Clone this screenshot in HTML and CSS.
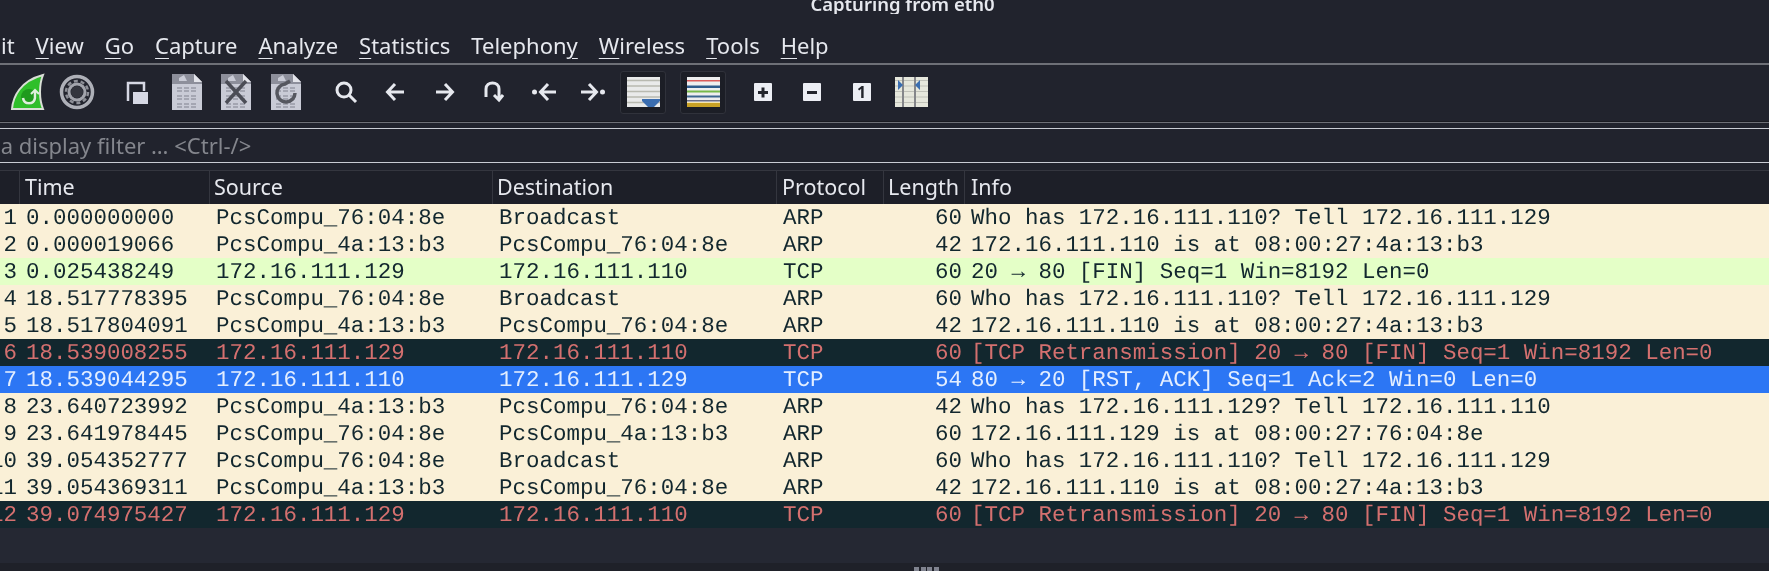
FILE: index.html
```html
<!DOCTYPE html>
<html lang="en">
<head>
    <meta charset="UTF-8">
    <meta name="viewport" content="width=device-width, initial-scale=1.0">
    <title>Capturing from eth0</title>
    <link rel="stylesheet" href="styles.css">
</head>
<body>
<div class="window">

    <div class="titlebar"><span>Capturing from eth0</span></div>

    <nav class="menubar">
        <span class="menu">File</span>
        <span class="menu"><u>E</u>dit</span>
        <span class="menu"><u>V</u>iew</span>
        <span class="menu"><u>G</u>o</span>
        <span class="menu"><u>C</u>apture</span>
        <span class="menu"><u>A</u>nalyze</span>
        <span class="menu"><u>S</u>tatistics</span>
        <span class="menu">Telephon<u>y</u></span>
        <span class="menu"><u>W</u>ireless</span>
        <span class="menu"><u>T</u>ools</span>
        <span class="menu"><u>H</u>elp</span>
    </nav>

    <div class="toolbar">
        <div class="tool">
            <svg width="35" height="38" viewBox="0 0 35 38">
                <path d="M2 36 C3 24 10 8 33 2 C29 12 29 26 33 36 Z" fill="#2fbf2a" stroke="#d9dfd6" stroke-width="2"/>
                <circle cx="19" cy="24" r="8" fill="#1f9a1d"/>
                <path d="M13 25 C14 32 24 32 25 25 L25 18" fill="none" stroke="#dff0dc" stroke-width="2.5"/>
                <path d="M21 21 L25 17 L29 21" fill="none" stroke="#dff0dc" stroke-width="2"/>
            </svg>
        </div>
        <div class="tool">
            <svg width="36" height="36" viewBox="0 0 36 36">
                <circle cx="18" cy="18" r="15.5" fill="#23252f" stroke="#aeb0b8" stroke-width="3.5"/>
                <circle cx="18" cy="18" r="11" fill="none" stroke="#8d8f97" stroke-width="2.5" stroke-dasharray="4 2.9"/>
                <circle cx="18" cy="18" r="8" fill="none" stroke="#a2a4ac" stroke-width="3"/>
                <circle cx="18" cy="18" r="6" fill="#33353e"/>
            </svg>
        </div>

        <div class="tool tool-gap">
            <svg width="22" height="23" viewBox="0 0 22 23">
                <path d="M2 20 V2 H18 V10" fill="none" stroke="#d6d8e4" stroke-width="2.5"/>
                <rect x="7" y="11" width="15" height="12" fill="#d6d8e4"/>
            </svg>
        </div>
        <div class="tool">
            <svg width="30" height="36" viewBox="0 0 30 36">
                <use href="#sheet"/>
            </svg>
        </div>
        <div class="tool">
            <svg width="30" height="36" viewBox="0 0 30 36">
                <use href="#sheet"/>
                <path d="M5 7 L25 29 M25 7 L5 29" stroke="#4b4d56" stroke-width="3.5"/>
            </svg>
        </div>
        <div class="tool">
            <svg width="30" height="36" viewBox="0 0 30 36">
                <use href="#sheet"/>
                <path d="M19 7 L14 10 A9 9 0 1 0 24 19" fill="none" stroke="#55575f" stroke-width="3.5"/>
            </svg>
        </div>

        <div class="tool tool-gap">
            <svg width="24" height="24" viewBox="0 0 24 24" class="glyph">
                <circle cx="10" cy="10" r="7"/>
                <path d="M15 15 L22 22"/>
            </svg>
        </div>
        <div class="tool">
            <svg width="20" height="20" viewBox="0 0 20 20" class="glyph">
                <path d="M19 10 H3 M10 2 L2.5 10 L10 18"/>
            </svg>
        </div>
        <div class="tool">
            <svg width="20" height="20" viewBox="0 0 20 20" class="glyph">
                <path d="M1 10 H17 M10 2 L17.5 10 L10 18"/>
            </svg>
        </div>
        <div class="tool">
            <svg width="20" height="22" viewBox="0 0 20 22" class="glyph">
                <path d="M2 16 V8 C2 0 15 0 15 8 V18 M10 14 L15 19 L19 14"/>
            </svg>
        </div>
        <div class="tool">
            <svg width="26" height="20" viewBox="0 0 26 20" class="glyph">
                <circle cx="3.5" cy="10" r="2.5" class="dot"/>
                <path d="M25 10 H10 M17 2 L9.5 10 L17 18"/>
            </svg>
        </div>
        <div class="tool">
            <svg width="26" height="20" viewBox="0 0 26 20" class="glyph">
                <circle cx="22.5" cy="10" r="2.5" class="dot"/>
                <path d="M1 10 H16 M9 2 L16.5 10 L9 18"/>
            </svg>
        </div>
        <div class="tool">
            <span class="toggle">
                <svg width="33" height="30" viewBox="0 0 33 30">
                    <rect width="33" height="30" fill="#e9eaea"/>
                    <path d="M0 3.5 H33 M0 9 H33 M0 14.5 H33 M0 20 H33 M0 25.5 H33" stroke="#b8b9b0" stroke-width="1.5"/>
                    <path d="M15 22 H33 V24 L27 30 H21 L15 24 Z" fill="#3a6db0"/>
                </svg>
            </span>
        </div>
        <div class="tool tool-gap">
            <span class="toggle">
                <svg width="33" height="30" viewBox="0 0 33 30">
                    <rect width="33" height="30" fill="#eeeeee"/>
                    <rect y="3" width="33" height="1.5" fill="#d95a5a"/>
                    <rect y="8.5" width="33" height="2.5" fill="#2e5b8c"/>
                    <rect y="13.5" width="33" height="2" fill="#76b84a"/>
                    <rect y="18.5" width="33" height="2" fill="#3d6690"/>
                    <rect y="23" width="33" height="1.5" fill="#6c6f86"/>
                    <rect y="25" width="33" height="1" fill="#f5e6b0"/>
                    <rect y="26" width="33" height="4" fill="#c9a227"/>
                </svg>
            </span>
        </div>
        <div class="tool tool-gap">
            <span class="zoombox"><i class="bar"></i><i class="bar bar-v"></i></span>
        </div>
        <div class="tool">
            <span class="zoombox"><i class="bar"></i></span>
        </div>
        <div class="tool">
            <span class="zoombox">1</span>
        </div>
        <div class="tool">
            <svg width="33" height="30" viewBox="0 0 33 30">
                <rect width="33" height="30" fill="#e6e7dc"/>
                <path d="M0 3.5 H33 M0 9 H33 M0 14.5 H33 M0 20 H33 M0 25.5 H33" stroke="#c0c1b8" stroke-width="1.2"/>
                <path d="M8 0 V30 M20 0 V30" stroke="#85868a" stroke-width="2"/>
                <path d="M3 3 L8 8 L3 13 Z M25 3 L20 8 L25 13 Z" fill="#3a6db0"/>
            </svg>
        </div>
    </div>

    <div class="filterbar">
        <div class="filter"><span class="filter-text">Apply a display filter … &lt;Ctrl-/&gt;</span></div>
    </div>

    <div class="pkt-list">
        <div class="pkt-head">
            <span>No.</span><span>Time</span><span>Source</span><span>Destination</span><span>Protocol</span><span>Length</span><span>Info</span>
        </div>

        <div class="pkt arp"><span>1</span><span>0.000000000</span><span>PcsCompu_76:04:8e</span><span>Broadcast</span><span>ARP</span><span>60</span><span>Who has 172.16.111.110? Tell 172.16.111.129</span></div>
        <div class="pkt arp"><span>2</span><span>0.000019066</span><span>PcsCompu_4a:13:b3</span><span>PcsCompu_76:04:8e</span><span>ARP</span><span>42</span><span>172.16.111.110 is at 08:00:27:4a:13:b3</span></div>
        <div class="pkt tcp"><span>3</span><span>0.025438249</span><span>172.16.111.129</span><span>172.16.111.110</span><span>TCP</span><span>60</span><span>20 → 80 [FIN] Seq=1 Win=8192 Len=0</span></div>
        <div class="pkt arp"><span>4</span><span>18.517778395</span><span>PcsCompu_76:04:8e</span><span>Broadcast</span><span>ARP</span><span>60</span><span>Who has 172.16.111.110? Tell 172.16.111.129</span></div>
        <div class="pkt arp"><span>5</span><span>18.517804091</span><span>PcsCompu_4a:13:b3</span><span>PcsCompu_76:04:8e</span><span>ARP</span><span>42</span><span>172.16.111.110 is at 08:00:27:4a:13:b3</span></div>
        <div class="pkt bad"><span>6</span><span>18.539008255</span><span>172.16.111.129</span><span>172.16.111.110</span><span>TCP</span><span>60</span><span>[TCP Retransmission] 20 → 80 [FIN] Seq=1 Win=8192 Len=0</span></div>
        <div class="pkt selected"><span>7</span><span>18.539044295</span><span>172.16.111.110</span><span>172.16.111.129</span><span>TCP</span><span>54</span><span>80 → 20 [RST, ACK] Seq=1 Ack=2 Win=0 Len=0</span></div>
        <div class="pkt arp"><span>8</span><span>23.640723992</span><span>PcsCompu_4a:13:b3</span><span>PcsCompu_76:04:8e</span><span>ARP</span><span>42</span><span>Who has 172.16.111.129? Tell 172.16.111.110</span></div>
        <div class="pkt arp"><span>9</span><span>23.641978445</span><span>PcsCompu_76:04:8e</span><span>PcsCompu_4a:13:b3</span><span>ARP</span><span>60</span><span>172.16.111.129 is at 08:00:27:76:04:8e</span></div>
        <div class="pkt arp"><span>10</span><span>39.054352777</span><span>PcsCompu_76:04:8e</span><span>Broadcast</span><span>ARP</span><span>60</span><span>Who has 172.16.111.110? Tell 172.16.111.129</span></div>
        <div class="pkt arp"><span>11</span><span>39.054369311</span><span>PcsCompu_4a:13:b3</span><span>PcsCompu_76:04:8e</span><span>ARP</span><span>42</span><span>172.16.111.110 is at 08:00:27:4a:13:b3</span></div>
        <div class="pkt bad"><span>12</span><span>39.074975427</span><span>172.16.111.129</span><span>172.16.111.110</span><span>TCP</span><span>60</span><span>[TCP Retransmission] 20 → 80 [FIN] Seq=1 Win=8192 Len=0</span></div>
    </div>

    <div class="detail-pane"></div>
    <div class="splitter"><span class="grip"></span></div>

    <!-- shared page shape for the file icons -->
    <svg width="0" height="0" class="defs">
        <defs>
            <g id="sheet">
                <path d="M0 0 H22 L30 8 V36 H0 Z" fill="#c9cbd6"/>
                <path d="M0 0 H22 L30 8 V10 H0 Z" fill="#8d8f9b"/>
                <path d="M22 0 L30 8 H22 Z" fill="#e3e4ea"/>
                <path d="M7 4 L12 1 L15 7 H7 Z" fill="#c9cbd6"/>
                <path d="M5 14 H25 M5 17 H25 M5 22 H25 M5 25 H25 M5 30 H25 M5 33 H25" stroke="#a4a6b2" stroke-width="2" stroke-dasharray="5 2"/>
            </g>
        </defs>
    </svg>
</div>
</body>
</html>
```

FILE: styles.css
```css
:root {
    --bg: #21232d;
    --bg-dark: #1c1e26;
    --text: #e6e8ee;
    --ink: #12272e;
}

body {
    margin: 0;
    background: var(--bg);
    overflow: hidden;
}

.window {
    display: flex;
    flex-direction: column;
    height: 571px;
    overflow: hidden;
    color: var(--text);
    font-family: "Noto Sans", sans-serif;
    filter: blur(0.5px);
}

/* title, cut off by the top of the frame */
.titlebar {
    height: 14px;
    flex: none;
    display: flex;
    justify-content: center;
    align-items: flex-end;
    padding-left: 36px;
    overflow: hidden;
    font-size: 18.5px;
    font-weight: 600;
    line-height: 20px;
}

.menubar {
    height: 51px;
    flex: none;
    box-sizing: border-box;
    display: flex;
    align-items: center;
    gap: 21px;
    margin-left: -81px;
    padding-top: 12px;
    border-bottom: 2px solid #6e7077;
    font-size: 22px;
    white-space: nowrap;
}

.menu u {
    text-underline-offset: 4px;
    text-decoration-thickness: 1px;
}

.toolbar {
    height: 57px;
    flex: none;
    display: flex;
    align-items: center;
    padding-left: 2.75px;
    padding-bottom: 2px;
    border-bottom: 1px solid #191a21;
    box-sizing: border-box;
}

.tool {
    width: 49.5px;
    flex: none;
    display: flex;
    justify-content: center;
    align-items: center;
}

.tool-gap { margin-left: 10.5px; }

.glyph {
    fill: none;
    stroke: #e6e8ee;
    stroke-width: 3;
}

.glyph .dot {
    fill: #e6e8ee;
    stroke: none;
}

.toggle {
    display: flex;
    padding: 5px 5px 6px 6px;
    background: var(--bg-dark);
    border: 1px solid #30323b;
    border-radius: 3px;
}

.zoombox {
    position: relative;
    display: flex;
    align-items: center;
    justify-content: center;
    width: 18px;
    height: 18px;
    background: #eceef4;
    border-radius: 1px;
    color: #22242c;
    font-size: 16px;
    line-height: 18px;
    font-weight: 700;
}

.zoombox .bar {
    position: absolute;
    width: 10px;
    height: 3px;
    background: #22242c;
}

.zoombox .bar-v { transform: rotate(90deg); }

.filterbar {
    height: 48px;
    flex: none;
    box-sizing: border-box;
    padding-top: 5px;
    border-top: 1px solid #6e7077;
}

.filter {
    height: 35px;
    box-sizing: border-box;
    display: flex;
    align-items: center;
    padding-bottom: 2px;
    border-top: 1.5px solid #c9ccd4;
    border-bottom: 1.5px solid #c9ccd4;
    color: #84868d;
    font-size: 22px;
    white-space: nowrap;
}

.filter-text { margin-left: -63px; }

/* packet list */
.pkt-head,
.pkt {
    display: grid;
    grid-template-columns: 19px 190px 283px 284px 107px 81px 1fr;
    white-space: nowrap;
}

.pkt-head {
    height: 34px;
    align-items: center;
    background: #1d1f28;
    border-top: 1px solid #34363f;
    box-sizing: border-box;
    font-size: 21.5px;
}

.pkt-head span {
    height: 100%;
    display: flex;
    align-items: center;
    padding-left: 4px;
    padding-bottom: 2px;
    box-sizing: border-box;
    border-left: 1px solid #34363f;
}

.pkt-head span:nth-child(2) { padding-left: 5px; }
.pkt-head span:nth-child(5) { padding-left: 5px; }
.pkt-head span:last-child { padding-left: 6px; }

.pkt-head span:first-child,
.pkt span:first-child {
    justify-content: flex-end;
}

.pkt-head span:first-child { visibility: hidden; }

.pkt {
    height: 27px;
    align-items: center;
    font-family: "Liberation Mono", monospace;
    font-size: 22.48px;
    line-height: 26px;
    text-rendering: geometricPrecision;
}

.pkt span { padding-left: 7px; }

.pkt span:first-child {
    display: flex;
    padding: 0 2px 0 0;
}

.pkt span:nth-child(6) {
    text-align: right;
    padding: 0 2px 0 0;
}

.arp { background: #faf0d7; color: var(--ink); }
.tcp { background: #e4ffc7; color: var(--ink); }
.bad { background: #12272e; color: #d4706f; }
.selected { background: #2c76f4; color: #e3eeff; }

.detail-pane {
    flex: 1;
    background: #252833;
}

.splitter {
    height: 8px;
    flex: none;
    display: flex;
    justify-content: center;
    align-items: flex-end;
    padding-left: 84px;
    background: #1f2129;
}

.grip {
    width: 26px;
    height: 4px;
    background: repeating-linear-gradient(90deg, #80838f 0 5px, transparent 5px 6.5px);
}

.defs { position: absolute; }
```
